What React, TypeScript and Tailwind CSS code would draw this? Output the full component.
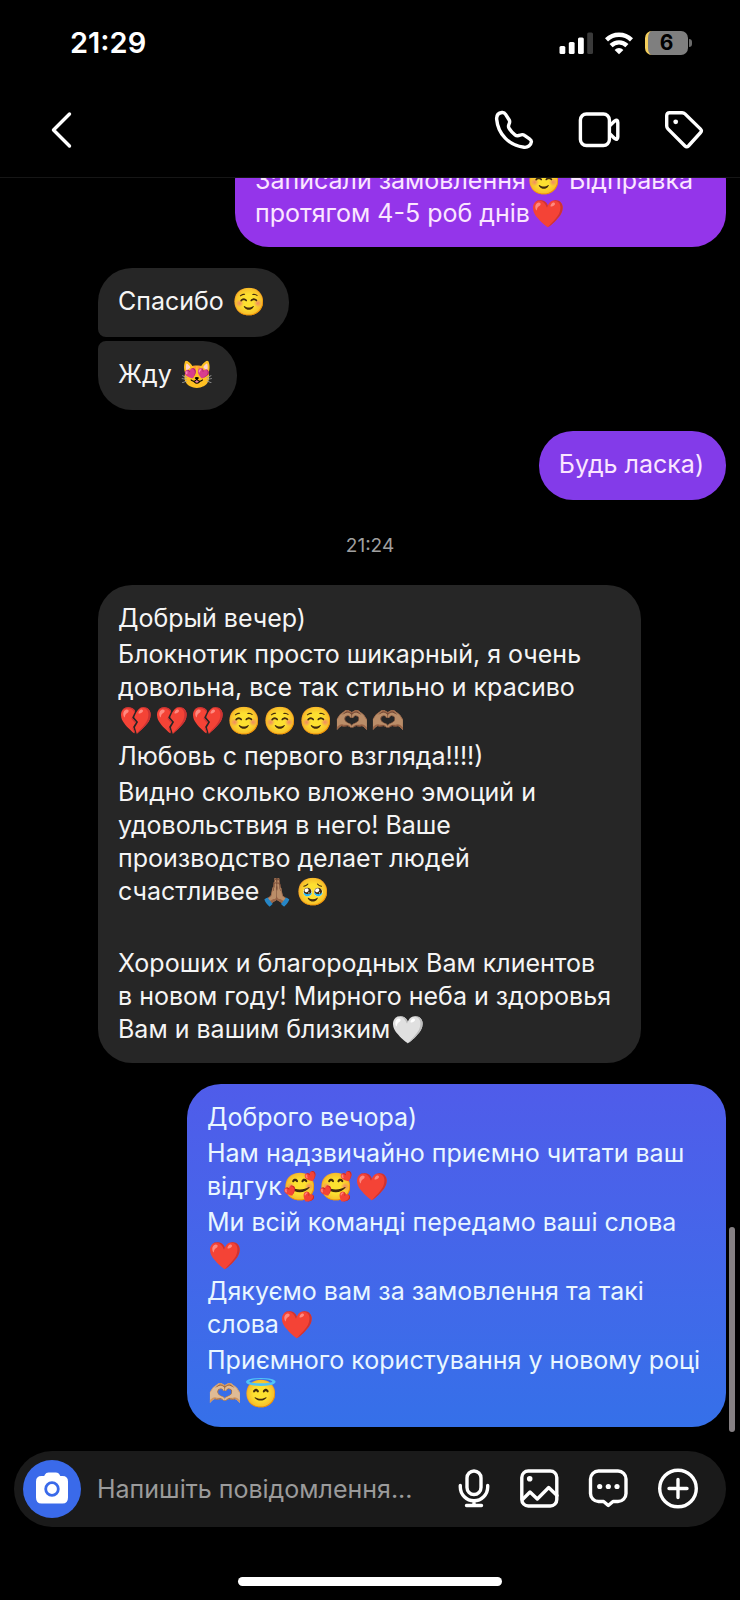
import { ReactNode } from 'react'
import clsx from 'clsx'

type Message = {
  from: 'me' | 'them'
  paragraphs: string[]
  bubble: string
}

const received = 'bg-[#262626] text-[#f5f5f5]'

// every string is a paragraph, \n is a line break inside of it
const thread: (Message | { time: string })[] = [
  {
    from: 'me',
    paragraphs: ['Записали замовлення☺️ Відправка\nпротягом 4-5 роб днів❤️'],
    bubble: 'w-[491px] rounded-[34px] bg-[#9435ea] text-[#fbe6ff]',
  },
  { from: 'them', paragraphs: ['Спасибо ☺️'], bubble: clsx(received, 'mt-[21px] rounded-[34px] rounded-bl-[8px]') },
  { from: 'them', paragraphs: ['Жду 😻'], bubble: clsx(received, 'mt-1 rounded-[34px] rounded-tl-[8px]') },
  { from: 'me', paragraphs: ['Будь ласка)'], bubble: 'mt-[21px] rounded-[34px] bg-[#833be9] text-[#fbe6ff]' },
  { time: '21:24' },
  {
    from: 'them',
    paragraphs: [
      'Добрый вечер)',
      'Блокнотик просто шикарный, я очень\nдовольна, все так стильно и красиво\n💔💔💔☺️☺️☺️🫶🏽🫶🏽',
      'Любовь с первого взгляда!!!!)',
      'Видно сколько вложено эмоций и\nудовольствия в него! Ваше\nпроизводство делает людей\nсчастливее🙏🏽🥹',
      ' ',
      'Хороших и благородных Вам клиентов\nв новом году! Мирного неба и здоровья\nВам и вашим близким🤍',
    ],
    bubble: clsx(received, 'w-[543px] rounded-[34px]'),
  },
  {
    from: 'me',
    paragraphs: [
      'Доброго вечора)',
      'Нам надзвичайно приємно читати ваш\nвідгук🥰🥰❤️',
      'Ми всій команді передамо ваші слова\n❤️',
      'Дякуємо вам за замовлення та такі\nслова❤️',
      'Приємного користування у новому році\n🫶🏼😇',
    ],
    bubble: 'mt-[21px] w-[539px] rounded-[34px] bg-linear-to-b from-[#4f5cea] to-[#3570e9] text-[#e9f7ff]',
  },
]

const emoji = /(\p{Extended_Pictographic}(?:\uFE0F|[\u{1F3FB}-\u{1F3FF}])?)/u

function Line({ text }: { text: string }) {
  return (
    <span className="block h-[33px] whitespace-pre">
      {text.split(emoji).map((part, i) =>
        i % 2 ? (
          <span key={i} className="inline-flex h-[33px] w-9 items-center justify-center align-top text-[27px]">
            {part}
          </span>
        ) : (
          part
        ),
      )}
    </span>
  )
}

function Bubble({ message }: { message: Message }) {
  return (
    <div
      className={clsx(
        'flex min-h-[69px] max-w-full shrink-0 flex-col gap-[3px] py-[17px] pr-[22px] pl-5 text-[25px] leading-[33px]',
        message.from === 'me' ? 'self-end' : 'self-start',
        message.bubble,
      )}
    >
      {message.paragraphs.map((text, i) => (
        <p key={i}>
          {text.split('\n').map((line, j) => (
            <Line key={j} text={line} />
          ))}
        </p>
      ))}
    </div>
  )
}

function IconButton({ label, className = 'w-[42px]', box = '0 0 42 42', children }: { label: string; className?: string; box?: string; children: ReactNode }) {
  return (
    <button type="button" aria-label={label} className={clsx('h-[42px] shrink-0', className)}>
      <svg viewBox={box} fill="none" stroke="currentColor" strokeWidth="3.4" strokeLinecap="round" strokeLinejoin="round" className="h-full w-full">
        {children}
      </svg>
    </button>
  )
}

function StatusBar() {
  return (
    <div className="flex h-[84px] shrink-0 items-center justify-between pt-0.5 pr-12 pl-[70px]">
      <span className="text-[29px] font-semibold">21:29</span>
      <div className="flex items-center gap-3">
        <svg viewBox="0 0 34 24" fill="currentColor" className="h-6 w-[34px]">
          <rect x="0.5" y="15" width="5.8" height="8" rx="1.5" />
          <rect x="9.8" y="11" width="5.8" height="12" rx="1.5" />
          <rect x="19" y="6.5" width="5.8" height="16.5" rx="1.5" />
          <rect x="28.2" y="1.5" width="5.8" height="21.5" rx="1.5" fill="#3a3a3a" />
        </svg>
        <svg viewBox="0 0 28 24" fill="none" stroke="currentColor" strokeWidth="4.4" className="h-6 w-7">
          <path d="M1.5 8.8a18 18 0 0 1 25 0" />
          <path d="M6.1 14.6a11.3 11.3 0 0 1 15.8 0" />
          <path d="M9.6 18.9a6.3 6.3 0 0 1 8.8 0L14 23.2Z" fill="currentColor" stroke="none" />
        </svg>
        <div className="flex items-center gap-px">
          <div className="h-6 w-[43px] rounded-[7px] border-l-[3px] border-[#f5cf5c] bg-[#7f7f7f] pr-[3px] text-center text-[21px] leading-6 font-bold text-black">
            6
          </div>
          <div className="h-2 w-[3px] rounded-r-full bg-[#6b6b6b]" />
        </div>
      </div>
    </div>
  )
}

function Header() {
  return (
    <header className="flex h-[94px] shrink-0 items-center justify-between border-b border-[#161616] pr-[35px] pb-0.5 pl-10">
      <IconButton label="Назад">
        <path d="M29.5 5L13.5 21L29.5 37" />
      </IconButton>
      <div className="flex items-center gap-[43px]">
        <IconButton label="Аудіодзвінок">
          <path d="M9 3.5C5.5 4 3.3 6.5 3.7 10.5C5 25 16 36.5 31 38.3C35 38.8 38 36 38.4 32.8C38.5 31.5 37.5 30.5 36.5 29.8L31.5 26.4C30.3 25.5 28.5 25.5 27 26.2C25 27 23.5 27 22 25.8C19.5 24 17.5 21.8 16 19.2C15.2 17.8 15.4 16.5 16 15.2C16.7 13.8 17 12.3 16.2 11L12.6 5.3C11.8 4 10.5 3.3 9 3.5Z" />
        </IconButton>
        <IconButton label="Відеодзвінок">
          <rect x="2.4" y="5" width="29" height="31.5" rx="6" />
          <path d="M32 16.5L36.6 12.1Q39.8 9.8 39.8 13.5V28Q39.8 31.7 36.6 29.4L32 25" />
        </IconButton>
        <IconButton label="Мітка">
          <path d="M6.7 3.7H19.2Q20.8 3.7 22 4.9L37.6 20.1Q39.3 21.8 37.6 23.5L25.4 37Q23.7 38.7 22 37L4.9 19.9Q3.7 18.7 3.7 17.1V6.7Q3.7 3.7 6.7 3.7Z" />
          <circle cx="12.7" cy="12.8" r="2.4" fill="currentColor" stroke="none" />
        </IconButton>
      </div>
    </header>
  )
}

function Composer() {
  return (
    <form className="mx-[14px] flex h-[76px] shrink-0 items-center gap-[27px] rounded-full bg-[#1a1a1a] pr-[27px] pl-[9px]" onSubmit={(e) => e.preventDefault()}>
      <div className="flex min-w-0 flex-1 items-center gap-4">
        <button type="button" aria-label="Камера" className="h-[58px] w-[58px] shrink-0 rounded-full bg-[#3a6aea]">
          <svg viewBox="0 0 58 58" className="h-full w-full">
            <path
              d="M22 14.5Q23 12.5 25.5 12.5H33Q35.5 12.5 36.5 14.5L37.3 16H39.5Q45 16 45 21.5V37.5Q45 43.5 39.5 43.5H18.5Q13 43.5 13 37.5V21.5Q13 16 18.5 16H21.2Z"
              fill="white"
            />
            <circle cx="29" cy="29" r="6.3" fill="none" stroke="#3a6aea" strokeWidth="2.8" />
          </svg>
        </button>
        <input
          aria-label="Повідомлення"
          placeholder="Напишіть повідомлення..."
          className="min-w-0 flex-1 bg-transparent pt-0.5 text-[25px] outline-none placeholder:text-[#9b9b9b]"
        />
      </div>
      <IconButton label="Голосове повідомлення" className="w-9" box="0 0 36 42">
        <rect x="11" y="3" width="14" height="23.5" rx="7" />
        <path d="M4.3 17.5V19A13.7 13.7 0 0 0 31.7 19V17.5M18 33V37.5M10.5 37.5H25.5" />
      </IconButton>
      <IconButton label="Галерея">
        <rect x="2.8" y="3" width="35" height="35" rx="6.5" />
        <path d="M4 31L11 24L18.3 31L29.7 19.5L38 27.5" />
        <circle cx="10.7" cy="10.7" r="2.8" fill="currentColor" stroke="none" />
      </IconButton>
      <IconButton label="Швидкі відповіді">
        <path d="M10.5 3H30A8 8 0 0 1 38 11V25.5A8 8 0 0 1 30 33.5H25L20.3 37.5L15.6 33.5H10.5A8 8 0 0 1 2.5 25.5V11A8 8 0 0 1 10.5 3Z" />
        <g fill="currentColor" stroke="none">
          <circle cx="11.7" cy="18.5" r="2.6" />
          <circle cx="20.3" cy="18.5" r="2.6" />
          <circle cx="29" cy="18.5" r="2.6" />
        </g>
      </IconButton>
      <IconButton label="Більше">
        <circle cx="21" cy="20.5" r="18.3" />
        <path d="M21 11.5V29.5M12 20.5H30" />
      </IconButton>
    </form>
  )
}

export default function App() {
  return (
    <div className="flex h-screen flex-col bg-black font-['Inter','Noto_Color_Emoji',sans-serif] text-white">
      <StatusBar />
      <Header />
      <main className="relative flex min-h-0 flex-1 flex-col justify-end overflow-hidden pr-[14px] pb-6 pl-[98px]">
        {thread.map((item, i) =>
          'time' in item ? (
            <time key={i} className="-ml-[84px] pt-[33px] pb-[27px] text-center text-[19px] leading-[25px] text-[#a0a0a0]">
              {item.time}
            </time>
          ) : (
            <Bubble key={i} message={item} />
          ),
        )}
        {/* scroll indicator */}
        <div className="absolute right-[5px] bottom-[19px] h-[205px] w-[6px] rounded-full bg-[#858083]" />
      </main>
      <Composer />
      <div className="flex shrink-0 justify-center pt-[50px] pb-[14px]">
        <div className="h-[9px] w-[264px] rounded-full bg-white" />
      </div>
    </div>
  )
}
